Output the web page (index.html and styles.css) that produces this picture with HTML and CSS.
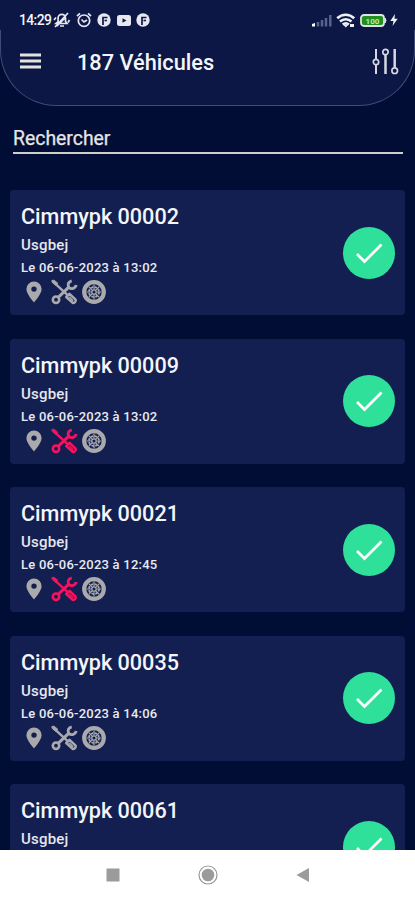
FILE: index.html
```html
<!DOCTYPE html>
<html lang="fr">
<head>
<meta charset="utf-8">
<meta name="viewport" content="width=device-width, initial-scale=1">
<title>Véhicules</title>
<link rel="stylesheet" href="styles.css">
</head>
<body>
<svg class="defs" aria-hidden="true">
  <symbol id="pin" viewBox="0 0 16 22"><path fill="currentColor" fill-rule="evenodd" d="M8 .5A7.6 7.6 0 0 0 .4 8.100C.4 13.500 8 21.500 8 21.500s7.600-8 7.600-13.400A7.600 7.600 0 0 0 8 .5Zm0 4.900a2.700 2.700 0 1 1 0 5.400 2.700 2.700 0 0 1 0-5.400Z"/></symbol>
  <symbol id="tools" viewBox="0 0 28 26"><g fill="none" stroke="currentColor">
    <path stroke-width="3.200" d="M7.500 18.500 19 7.500"/>
    <circle cx="5.200" cy="21" r="3.300" stroke-width="2.700"/>
    <path stroke-width="3" d="M21.500 1.400C18 2.200 16.800 5.500 18.500 8.200c2.600 2.300 6.800 1.300 7.600-2.400"/>
    <path stroke-width="2.500" d="m3.500 3.500 13.500 12.500"/>
    <path fill="currentColor" stroke-width="1" d="M.8 1.200 3 .7l4 3.100-2 2.200-3.500-2.600Z"/>
    <path stroke-width="2.600" stroke-linejoin="round" d="m15.800 18.200 3.400-3.200 6.300 6c.8 1.900-1.300 3.800-3 3.200Z"/>
    <path stroke-width="1.500" d="m19 18 4 4"/>
  </g></symbol>
  <symbol id="wheel" viewBox="0 0 24 24"><g fill="none" stroke="currentColor">
    <circle cx="12" cy="12" r="9.800" stroke-width="4.200"/>
    <circle cx="12" cy="12" r="5" stroke-width="1.800" stroke-dasharray="2.400 1.527"/>
    <circle cx="12" cy="12" r="2.200" stroke-width="1.300"/>
    <path stroke-width="1.200" d="M12 4.500v5m0 5v5M4.500 12h5m5 0h5M6.700 6.700l3.500 3.500m3.600 3.600 3.500 3.500m0-10.600-3.500 3.500m-3.600 3.600-3.500 3.500"/>
  </g></symbol>
  <symbol id="check" viewBox="0 0 52 52"><path fill="none" stroke="#fff" stroke-width="2.700" d="m14 27 7.500 7.500 17-17"/></symbol>
  <symbol id="app" viewBox="0 0 14 14"><circle cx="7" cy="7" r="6.700" fill="#e6e8f1"/><path d="M6 12V4.500h4.500M10 7.500H7.500" fill="none" stroke="#0c1745" stroke-width="1.700"/></symbol>
</svg>
<div class="screen">
  <header class="top"><div class="header">
    <div class="status">
      <span class="clock">14:29</span>
      <svg class="mute" viewBox="0 0 18 16"><g fill="none" stroke="#e6e8f1" stroke-width="1.700"><path d="M3 11.500h11l-1.500-2V6a3.700 3.700 0 0 0-7.400 0v3.500ZM7 14h4M2 15 15 1M1 8l2-2.500M16.500 8 15 10.500M4 14l9-9"/></g></svg>
      <svg class="alarm" viewBox="0 0 16 16"><g fill="none" stroke="#e6e8f1" stroke-width="1.700"><circle cx="8" cy="8.700" r="5.700"/><path d="m1 4 3-2.600M15 4l-3-2.600M5.500 7.500 8 10l3-2"/></g></svg>
      <svg class="app"><use href="#app"/></svg>
      <svg class="video" viewBox="0 0 14 11"><rect width="14" height="11" rx="2.500" fill="#e6e8f1"/><path d="m5.500 3.200 4 2.300-4 2.300Z" fill="#0c1745"/></svg>
      <svg class="app"><use href="#app"/></svg>
      <svg class="signal" viewBox="0 0 20 13"><path d="M0 12.500V10l3-1v3.500Z" fill="#fff"/><path d="M6 12.500V8M10 12.500V6M14 12.500V4M18.300 12.500V1" stroke="#59638a" stroke-width="2.500"/></svg>
      <svg class="wifi" viewBox="0 0 20 15"><g fill="none" stroke="#eef0f8" stroke-width="2.600"><path d="M1.200 5.200c5-4.600 12-4.600 17 0M4 8.600c3.500-3 8-3 11.500 0M6.700 11.600c2-1.600 4.200-1.600 6.200 0"/></g><path d="m7.500 12 2.300 2.500L12 12ZM14 11h4v3h-4Z" fill="#eef0f8"/></svg>
      <svg class="battery" viewBox="0 0 27 13"><rect x="1" y="1" width="23" height="11" rx="3" fill="#248d22" stroke="#dfe2e8" stroke-width="1.800"/><path d="M25 4q2 2.500 0 5Z" fill="#dfe2e8" stroke="#dfe2e8"/><text x="12.500" y="9.500" text-anchor="middle" class="charge">100</text></svg>
      <svg class="bolt" viewBox="0 0 8 12"><path d="M5 0 .3 7H3.500L2.500 12 7.700 4.700H4.500Z" fill="#eef0f8"/></svg>
    </div>
    <div class="bar">
      <svg class="menu" viewBox="0 0 21 16"><path d="M0 2h21M0 8h21M0 14h21" stroke="#e4e4df" stroke-width="2.900"/></svg>
      <h1>187 Véhicules</h1>
      <svg class="filters" viewBox="0 0 27 27"><g fill="none" stroke="#d5d8e2"><path stroke-width="2" d="M4 1v10.500m0 5.500v9"/><path stroke-width="2.500" d="M13.500 7v19M22.700 1v18.500"/><circle cx="4" cy="14" r="2.700" stroke-width="1.700"/><circle cx="13.500" cy="4" r="2.700" stroke-width="1.700"/><circle cx="22.700" cy="22.700" r="2.800" stroke-width="1.700"/></g></svg>
    </div>
  </div></header>
  <div class="search">Rechercher</div>
  <main class="list">
    <article class="card"><div><h2>Cimmypk 00002</h2><p class="owner">Usgbej</p><p class="date">Le 06-06-2023 à 13:02</p><div class="icons"><svg class="pin"><use href="#pin"/></svg><svg class="tools"><use href="#tools"/></svg><svg class="wheel"><use href="#wheel"/></svg></div></div><svg class="ok"><use href="#check"/></svg></article>
    <article class="card"><div><h2>Cimmypk 00009</h2><p class="owner">Usgbej</p><p class="date">Le 06-06-2023 à 13:02</p><div class="icons"><svg class="pin"><use href="#pin"/></svg><svg class="tools alert"><use href="#tools"/></svg><svg class="wheel"><use href="#wheel"/></svg></div></div><svg class="ok"><use href="#check"/></svg></article>
    <article class="card"><div><h2>Cimmypk 00021</h2><p class="owner">Usgbej</p><p class="date">Le 06-06-2023 à 12:45</p><div class="icons"><svg class="pin"><use href="#pin"/></svg><svg class="tools alert"><use href="#tools"/></svg><svg class="wheel"><use href="#wheel"/></svg></div></div><svg class="ok"><use href="#check"/></svg></article>
    <article class="card"><div><h2>Cimmypk 00035</h2><p class="owner">Usgbej</p><p class="date">Le 06-06-2023 à 14:06</p><div class="icons"><svg class="pin"><use href="#pin"/></svg><svg class="tools"><use href="#tools"/></svg><svg class="wheel"><use href="#wheel"/></svg></div></div><svg class="ok"><use href="#check"/></svg></article>
    <article class="card"><div><h2>Cimmypk 00061</h2><p class="owner">Usgbej</p></div><svg class="ok"><use href="#check"/></svg></article>
  </main>
  <nav class="nav">
    <svg viewBox="0 0 20 20"><path d="M3.500 3.500h13v13h-13Z" fill="#9b9b9b"/></svg>
    <svg viewBox="0 0 20 20"><circle cx="10" cy="10" r="9" fill="none" stroke="#999" stroke-width="1.200"/><circle cx="10" cy="10" r="6.300" fill="#9b9b9b"/></svg>
    <svg viewBox="0 0 20 20"><path d="M3.500 10 16 3v14Z" fill="#9b9b9b"/></svg>
  </nav>
</div>
</body>
</html>
```
FILE: styles.css
```css
* { box-sizing: border-box; }
body { margin: 0; font-family: Roboto, "Liberation Sans", sans-serif; color: #f4f5fa; }
h1, h2, p { margin: 0; font-weight: 500; white-space: nowrap; }
svg { display: block; flex: none; }
.defs { width: 0; height: 0; position: absolute; }
.screen { display: flex; flex-direction: column; height: 900px; overflow: hidden; background: #020d35; }
.top { flex: none; background: linear-gradient(#0c1745 30px, transparent 30px); }
.header { height: 106px; border-radius: 0 0 56px 56px; background: #0c1745; border: solid #414b75; border-width: 0 1px 1px; }
.status { display: flex; align-items: center; height: 30px; margin: 0 -1px; padding: 10px 17px 0 19px; background: #0c1745; }
.clock { width: 34px; font-size: 13.900px; font-weight: 500; letter-spacing: -.6px; }
.mute { width: 18px; height: 16px; margin-right: 5px; }
.alarm { width: 16px; height: 16px; margin-right: 5px; }
.app { width: 14px; height: 14px; }
.video { width: 14px; height: 11px; margin: 0 5px 0 6px; }
.signal { width: 20px; height: 13px; margin: 0 4px 0 auto; }
.wifi { width: 20px; height: 15px; margin-right: 4px; }
.battery { width: 27px; height: 13px; margin-right: 3px; }
.charge { font-size: 8px; font-weight: 700; fill: #b7efb0; }
.bolt { width: 8px; height: 12px; }
.bar { display: flex; align-items: center; height: 62px; padding: 0 15px 0 19px; }
.menu { width: 21px; height: 16px; margin-right: 36px; }
h1 { flex: 1; font-size: 21.750px; line-height: 28px; padding-top: 3px; }
.filters { width: 27px; height: 27px; }
.search { flex: none; height: 27px; margin: 21px 12px 0 13px; border-bottom: 2px solid #cfcfca; font-size: 19.400px; line-height: 23px; color: #e6e6e5; -webkit-text-stroke: .25px #e6e6e5; }
.list { flex: 1; min-height: 0; overflow: hidden; display: flex; flex-direction: column; gap: 23.200px; padding: 36.200px 10px 0; }
.card { flex: none; display: flex; align-items: center; justify-content: space-between; height: 125.300px; padding: 0 10px 0 11px; border-radius: 4px; background: #131f50; }
.card > div { align-self: flex-start; padding-top: 13.300px; }
h2 { font-size: 21.600px; line-height: 28px; }
.owner { font-size: 15px; line-height: 18px; margin-top: 5px; letter-spacing: .2px; color: #e6e7ee; }
.date { font-size: 13px; line-height: 16px; margin-top: 6px; letter-spacing: .23px; color: #e9eaf0; }
.icons { display: flex; align-items: center; height: 26px; margin-top: 3px; padding-left: 5px; color: #aaaaad; }
.pin { width: 16px; height: 22px; margin-right: 9px; }
.tools { width: 27px; height: 26px; margin-right: 4px; }
.alert { color: #f3145f; }
.wheel { width: 24px; height: 24px; }
.ok { width: 52px; height: 52px; border-radius: 50%; background: #2ee09a; }
.nav { flex: none; height: 50px; display: flex; justify-content: center; gap: 75px; padding-top: 15px; background: #fff; }
.nav svg { width: 20px; height: 20px; }
```
